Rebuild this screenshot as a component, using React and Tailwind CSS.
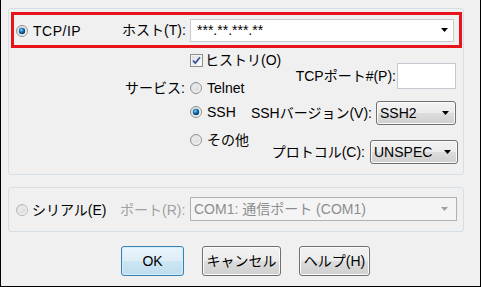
import React, { useId } from 'react';

const Radio = ({ checked = false, disabled = false }) => {
  const id = useId().replace(/:/g, '');
  return (
    <svg width="12" height="12" viewBox="0 0 12 12" className="shrink-0">
      <defs>
        <linearGradient id={`rg${id}`} x1="0" y1="0" x2="1" y2="1">
          <stop offset="0" stopColor="#d6d6d6" />
          <stop offset="1" stopColor="#ffffff" />
        </linearGradient>
        <linearGradient id={`ri${id}`} x1="0" y1="0" x2="1" y2="1">
          <stop offset="0" stopColor="#f0f0f0" />
          <stop offset="1" stopColor="#d8d8d8" />
        </linearGradient>
        <radialGradient id={`rb${id}`} cx="0.4" cy="0.35" r="0.6">
          <stop offset="0" stopColor="#8fd8fb" />
          <stop offset="0.45" stopColor="#1c80c4" />
          <stop offset="1" stopColor="#0d3c63" />
        </radialGradient>
      </defs>
      <circle cx="6" cy="6" r="5.5" fill={`url(#rg${id})`} stroke={disabled ? '#b8b8b8' : '#8e8f8f'} />
      {checked ? (
        <circle cx="6" cy="6" r="3.2" fill={`url(#rb${id})`} />
      ) : (
        <circle cx="6" cy="6" r="3.5" fill={`url(#ri${id})`} />
      )}
    </svg>
  );
};

const Check = () => (
  <svg width="13" height="13" viewBox="0 0 13 13" className="shrink-0">
    <defs>
      <linearGradient id="cbg" x1="0" y1="0" x2="1" y2="1">
        <stop offset="0" stopColor="#dcdcdc" />
        <stop offset="1" stopColor="#ffffff" />
      </linearGradient>
    </defs>
    <rect x="0.5" y="0.5" width="12" height="12" fill="#f4f4f4" stroke="#8e8f8f" />
    <rect x="2" y="2" width="9" height="9" fill="url(#cbg)" />
    <path d="M3 6.5 L5.3 9 L10 3.2" fill="none" stroke="#3b54a0" strokeWidth="1.8" />
  </svg>
);

const Arrow = ({ color = '#000' }) => (
  <svg width="7" height="4" viewBox="0 0 7 4" className="shrink-0">
    <polygon points="0,0 7,0 3.5,4" fill={color} />
  </svg>
);

const Select = ({ value, className }) => (
  <div
    className={`flex items-center justify-between border border-[#707070] rounded-[3px] bg-[linear-gradient(#f2f2f2,#ebebeb_50%,#dddddd_50%,#cfcfcf)] shadow-[inset_0_0_0_1px_#fbfbfb] pl-[3px] pr-[6px] ${className}`}
  >
    <span className="leading-[16px]">{value}</span>
    <Arrow />
  </div>
);

const Button = ({ children, className, primary }) => (
  <div
    className={`flex items-center justify-center h-[30px] rounded-[3px] border leading-[16px] ${
      primary
        ? 'border-[#3c7fb1] bg-[linear-gradient(#eaf5fc,#dcedf7_50%,#cde6f4_50%,#bfdcee)] shadow-[inset_0_0_0_1px_#cdeefd]'
        : 'border-[#707070] bg-[linear-gradient(#f2f2f2,#ebebeb_50%,#dddddd_50%,#cfcfcf)] shadow-[inset_0_0_0_1px_#fbfbfb]'
    } ${className}`}
  >
    {children}
  </div>
);

export default function App() {
  return (
    <div className="w-[481px] h-[287px] bg-[#f0f0f0] border-x border-b border-black box-border pt-2 text-[14px] text-black font-['Liberation_Sans','Noto_Sans_CJK_JP',sans-serif] overflow-hidden">
      {/* TCP/IP group */}
      <div className="ml-[7px] w-[456px] h-[167px] border border-[#d5dfe5] rounded-[3px]">
        <div className="ml-[2px] mt-[3px] w-[451px] h-[36px] border-[3px] border-[#e8141c] flex items-center">
          <div className="ml-[2px] mt-[2px]">
            <Radio checked />
          </div>
          <span className="ml-[5px] w-[89px] leading-[16px] mt-[2px] tracking-[0.5px]">TCP/IP</span>
          <span className="w-[68px] leading-[16px]">ホスト(T):</span>
          <div className="w-[264px] h-[23px] bg-white border border-[#c5cbd1] flex items-center justify-between pl-[6px] pr-[5px]">
            <span className="leading-[16px]">***.**.***.**</span>
            <Arrow />
          </div>
        </div>

        <div className="flex">
          <div className="w-[181px] flex justify-end pr-[5px]">
            <span className="mt-[32px] leading-[16px] h-[16px] whitespace-nowrap">サービス:</span>
          </div>

          <div className="w-[55px] flex flex-col whitespace-nowrap">
            <div className="mt-[4px] h-[16px] flex items-center">
              <Check />
              <span className="ml-[2px] leading-[16px]">ヒストリ(O)</span>
            </div>
            <div className="mt-[12px] h-[16px] flex items-center">
              <Radio />
              <span className="ml-[5px] leading-[16px]">Telnet</span>
            </div>
            <div className="mt-[8px] h-[16px] flex items-center">
              <Radio checked />
              <span className="ml-[5px] leading-[16px]">SSH</span>
            </div>
            <div className="mt-[12px] h-[16px] flex items-center">
              <Radio />
              <span className="ml-[5px] leading-[16px]">その他</span>
            </div>
          </div>

          <div className="flex-1 flex flex-col items-end whitespace-nowrap">
            <div className="mt-[15px] mr-[7px] flex items-center">
              <span className="leading-[16px] mr-[1px]">TCPポート#(P):</span>
              <div className="w-[59px] h-[26px] bg-white border border-[#c5cbd1]" />
            </div>
            <div className="mt-[12px] mr-[7px] flex items-center">
              <span className="leading-[16px] mr-[4px]">SSHバージョン(V):</span>
              <Select value="SSH2" className="w-[80px] h-[24px]" />
            </div>
            <div className="mt-[15px] mr-[5px] flex items-center">
              <span className="leading-[16px] mr-[5px]">プロトコル(C):</span>
              <Select value="UNSPEC" className="w-[88px] h-[24px]" />
            </div>
          </div>
        </div>
      </div>

      {/* Serial group */}
      <div className="ml-[7px] mt-[12px] w-[456px] h-[45px] border border-[#d5dfe5] rounded-[3px] flex items-center whitespace-nowrap">
        <div className="ml-[7px]">
          <Radio disabled />
        </div>
        <span className="ml-[4px] w-[88px] leading-[16px]">シリアル(E)</span>
        <span className="w-[70px] leading-[16px] text-[#a0a0a0]">ポート(R):</span>
        <div className="w-[267px] h-[24px] -mt-[2px] border border-[#adb2b5] bg-[#f4f4f4] flex items-center justify-between pl-[3px] pr-[8px]">
          <span className="leading-[16px] text-[#8d8d8d]">COM1: 通信ポート (COM1)</span>
          <Arrow color="#a0a0a0" />
        </div>
      </div>

      {/* Buttons */}
      <div className="mt-[14px] ml-[120px] flex gap-[18px]">
        <Button primary className="w-[63px]">OK</Button>
        <Button className="w-[79px]">キャンセル</Button>
        <Button className="w-[71px]">ヘルプ(H)</Button>
      </div>
    </div>
  );
}
